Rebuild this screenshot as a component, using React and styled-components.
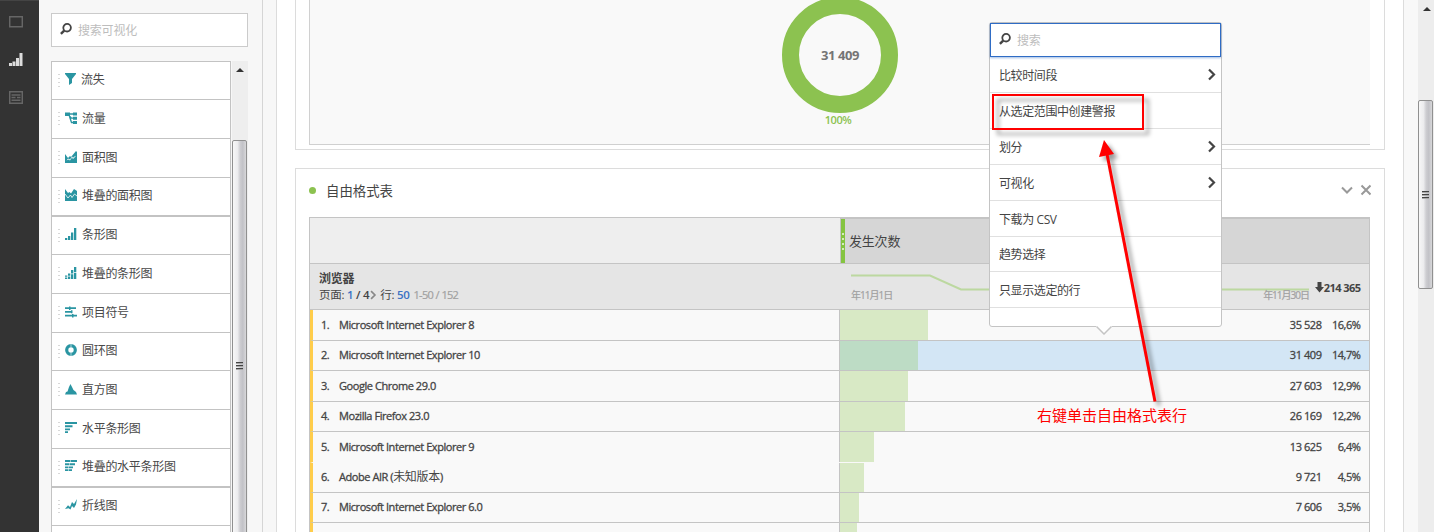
import React from "react";
import styled, { createGlobalStyle, css } from "styled-components";

const Global = createGlobalStyle`
  * { box-sizing: border-box; }
  html, body { margin: 0; padding: 0; overflow: hidden; background: #fff; }
  body { font-family: "Open Sans", "Noto Sans CJK SC", sans-serif; font-size: 12px; color: #444; }
`;

const Page = styled.div`
  position: relative;
  display: flex;
  width: 1434px;
  height: 532px;
  overflow: hidden;
  background: #f7f7f7;
`;

const Rail = styled.nav`
  display: flex;
  flex-direction: column;
  align-items: flex-start;
  width: 39px;
  padding: 15px 0 0 9px;
  background: #333;
  border-top: 1px solid #444;
  flex: none;
`;
const RailIcon = styled.svg`
  display: block;
  width: 14px;
  height: 14px;
  margin-bottom: ${(p) => p.$gap || 0}px;
`;

const Sidebar = styled.aside`
  width: 224px;
  flex: none;
  padding: 13px 14px 0 12px;
  border-right: 1px solid #d5d5d5;
`;
const SearchBox = styled.div`
  display: flex;
  align-items: center;
  height: 34px;
  padding-left: 8px;
  background: #fff;
  border: 1px solid #cbcbcb;
  color: #bdbdbd;
  letter-spacing: -0.2px;
  line-height: 18px;
  svg { margin-right: 6px; margin-top: -2px; }
`;
const SearchHint = styled.span`
  padding-top: 1px;
`;
const ListArea = styled.div`
  display: flex;
  margin-top: 14px;
  height: 480px;
`;
const VizList = styled.div`
  width: 180px;
  border: 1px solid #c3c3c3;
  border-bottom: 0;
  background: #fff;
`;
const VizItem = styled.div`
  display: flex;
  align-items: center;
  height: ${(p) => p.$h}px;
  padding: 0 0 3px 6px;
  border-bottom: ${(p) => (p.$thick ? 2 : 1)}px solid #c3c3c3;
  color: #484848;
  letter-spacing: -0.3px;
`;
const DragDots = styled.span`
  width: 2px;
  height: 16px;
  margin: 5px 5px 0 0;
  background: repeating-linear-gradient(#d8d8d8 0 1px, transparent 1px 4px);
`;
const VizIcon = styled.svg`
  width: 12px;
  height: 12px;
  margin-right: ${(p) => p.$gap}px;
  fill: #2a95a2;
  flex: none;
`;

const ListScroll = styled.div`
  width: 16px;
  margin-left: 1px;
  background: #eee;
  padding-top: 7px;
`;
const UpMark = styled.i`
  display: block;
  width: 0;
  height: 0;
  margin: 0 auto;
  border: 4px solid transparent;
  border-top: 0;
  border-bottom: 4px solid #333;
`;
const Thumb = styled.div`
  display: flex;
  align-items: center;
  justify-content: center;
  width: 15px;
  height: ${(p) => p.$h}px;
  margin-top: ${(p) => p.$top}px;
  border: 1px solid #909090;
  border-radius: 2px;
  background: linear-gradient(90deg, #f7f7f7, #ececee 35%, #cdcdd1 55%, #c2c2c7 75%, #d8d8da);
`;
const Grip = styled.i`
  width: 7px;
  height: 8px;
  margin-right: 1px;
  background: repeating-linear-gradient(#444 0 1px, #aaa 1px 2px, transparent 2px 3px);
`;

const Main = styled.main`
  width: 1128px;
  margin-left: 13px;
  padding: 0 18px;
  background: #fff;
  border: solid #dcdcdc;
  border-width: 0 1px;
  flex: none;
`;
const Panel = styled.section`
  border: 1px solid #dcdcdc;
  padding: 0 13px;
  height: ${(p) => p.$h}px;
  margin-bottom: 18px;
`;
const TopPanel = styled(Panel)`
  border-top: 0;
`;
const ChartBox = styled.div`
  display: flex;
  flex-direction: column;
  align-items: center;
  width: 1061px;
  height: 145px;
  background: #f9f9f9;
  border: solid #d0d0d0;
  border-width: 0 0 1px 1px;
`;
const Donut = styled.div`
  display: grid;
  place-items: center;
  width: 116px;
  height: 116px;
  margin-top: -3px;
  border: 17px solid #8cc250;
  border-radius: 50%;
  color: #757575;
  font-weight: 700;
  font-size: 13px;
  letter-spacing: -0.4px;
`;
const Percent = styled.div`
  margin-right: 4px;
  line-height: 14px;
  font-weight: 600;
  font-size: 11px;
  letter-spacing: -0.5px;
  color: #8cc250;
`;

const PanelHead = styled.header`
  display: flex;
  align-items: center;
  height: 48px;
  padding-bottom: 5px;
`;
const Dot = styled.i`
  width: 7px;
  height: 7px;
  margin-right: 10px;
  border-radius: 50%;
  background: #8cc250;
`;
const PanelTitle = styled.h2`
  flex: 1;
  margin: 0;
  padding-bottom: 1px;
  font-size: 13.4px;
  font-weight: 400;
`;
const PanelTools = styled.svg`
  width: 30px;
  height: 12px;
  margin-bottom: 2px;
  fill: none;
  stroke: #999;
  stroke-width: 2;
`;

const Table = styled.div`
  width: 1061px;
  border: 1px solid #c4c4c4;
  background: #f9f9f9;
`;
const HeadRow = styled.div`
  display: flex;
  height: 46px;
  border-bottom: 1px solid #c4c4c4;
`;
const Blank = styled.div`
  width: 531px;
  background: #eee;
  border-right: 1px solid #c4c4c4;
`;
const MetricHead = styled.div`
  display: flex;
  align-items: center;
  flex: 1;
  background: #d6d6d6;
  border-top: 1px solid #c4c4c4;
  font-size: 13px;
  letter-spacing: -0.2px;
`;
const MetricName = styled.span`
  padding-bottom: 2px;
`;
const Handle = styled.span`
  display: flex;
  align-items: center;
  justify-content: center;
  align-self: stretch;
  width: 4px;
  margin-right: 4px;
  background: #85c441;
  &::after {
    content: "";
    width: 2px;
    height: 17px;
    background: repeating-linear-gradient(#d4ebbc 0 2px, transparent 2px 5px);
  }
`;
const DimRow = styled(HeadRow)`
  background: #e5e5e5;
`;
const DimCell = styled.div`
  width: 530px;
  padding: 7px 0 0 9px;
  line-height: 16px;
`;
const DimName = styled.div`
  font-weight: 700;
  letter-spacing: -0.3px;
`;
const Paging = styled.div`
  display: flex;
  align-items: center;
  font-size: 11.5px;
  letter-spacing: -0.25px;
  white-space: pre;
  b { font-weight: 600; }
`;
const Blue = styled.b`
  color: #3b72c4;
`;
const Muted = styled.span`
  color: #a0a0a0;
  margin-left: 4px;
  font-size: 11px;
  letter-spacing: -0.75px;
  word-spacing: 0.5px;
  -webkit-text-stroke: 0.2px #a0a0a0;
`;
const TrendCell = styled.div`
  display: flex;
  flex: 1;
  padding-left: 11px;
`;
const Trend = styled.div`
  width: 458px;
  flex: none;
  padding-top: 9px;
  svg { display: block; }
`;
const TrendDates = styled.div`
  display: flex;
  justify-content: space-between;
  margin-top: -5px;
  line-height: 14px;
  font-size: 10px;
  letter-spacing: -1px;
  color: #a0a0a0;
  -webkit-text-stroke: 0.2px #a0a0a0;
`;
const Total = styled.div`
  display: flex;
  align-items: center;
  flex: 1;
  justify-content: flex-end;
  padding-right: 8.500px;
  padding-top: 1px;
  font-weight: 700;
  font-size: 11px;
  letter-spacing: -0.55px;
  white-space: nowrap;
`;

const Row = styled.div`
  display: flex;
  align-items: stretch;
  height: ${(p) => p.$h}px;
  border-bottom: 1px solid ${(p) => (p.$open ? "#f9f9f9" : "#c4c4c4")};
  border-left: 3px solid #ffcd4b;
  line-height: ${(p) => p.$h - 2}px;
  font-size: 11px;
  letter-spacing: -0.44px;
  -webkit-text-stroke: 0.3px #444;
`;
const Rank = styled.span`
  width: 26px;
  padding-left: 8px;
`;
const Name = styled.span`
  width: 500px;
  flex: none;
`;
const Cjk = styled.span`
  font-size: 12px;
  letter-spacing: -0.3px;
  -webkit-text-stroke: 0;
`;
const Values = styled.div`
  display: flex;
  flex: 1;
  justify-content: flex-end;
  padding-right: 8.500px;
  border-left: 1px solid #c4c4c4;
  ${(p) => css`
    background: linear-gradient(${p.$on ? "#bddcc5, #bddcc5" : "#d8e9c5, #d8e9c5"}) 0 0 / ${p.$bar}px 100% no-repeat
      ${p.$on ? "#d3e6f5" : "#f9f9f9"};
  `}
`;
const Pct = styled.span`
  width: 39px;
  text-align: right;
`;

const Outer = styled.div`
  width: 31px;
  flex: none;
  padding-left: 14px;
  background: #f8f8f8;
`;
const PageScroll = styled.div`
  width: 17px;
  height: 532px;
  padding: 7px 0 0 0;
  background: #ededed;
`;

const Menu = styled.div`
  position: absolute;
  left: 989px;
  top: 22px;
  width: 233px;
  height: 305px;
  background: #fff;
  border: 1px solid #c4c4c4;
  border-radius: 3px;
`;
const MenuSearch = styled(SearchBox)`
  height: 34px;
  margin-bottom: 1px;
  border: 1px solid #2f6cc5;
  box-shadow: 0 1px 2px rgba(47, 108, 197, 0.45);
`;
const MenuItem = styled.div`
  display: flex;
  align-items: center;
  justify-content: space-between;
  height: ${(p) => p.$h}px;
  padding: 0 5px 0 9px;
  border-bottom: 1px solid #e0e0e0;
  letter-spacing: -0.4px;
  svg { margin-bottom: 1px; }
`;
const Caret = styled.svg`
  position: absolute;
  left: 106px;
  top: 302px;
  width: 16px;
  height: 10px;
`;
const Highlight = styled.div`
  position: absolute;
  left: 992px;
  top: 94px;
  width: 152px;
  height: 36px;
  border: 2px solid #f00;
  filter: drop-shadow(5px 5px 2px rgba(0, 0, 0, 0.4));
`;
const Pointer = styled.svg`
  position: absolute;
  left: 1090px;
  top: 130px;
  width: 85px;
  height: 285px;
  filter: drop-shadow(4px 4px 2px rgba(0, 0, 0, 0.4));
`;
const Note = styled.div`
  position: absolute;
  left: 1037px;
  top: 404px;
  line-height: 22px;
  font-size: 15px;
  white-space: nowrap;
  color: #f00;
`;

const Magnifier = () => (
  <svg width="12" height="12" viewBox="0 0 12 12" fill="none" stroke="#444">
    <circle cx="7.1" cy="4.7" r="3.800" strokeWidth="1.800" />
    <path d="M4.200 7.600 .9 10.900" strokeWidth="2.400" />
  </svg>
);
const Chevron = ({ w = 9, h = 13, color = "#444", sw = 2.2 }) => (
  <svg width={w} height={h} viewBox="0 0 9 13" fill="none" stroke={color} strokeWidth={sw}>
    <path d="M2 1.5 7 6.5 2 11.5" />
  </svg>
);

const icons = {
  funnel: <path d="M0 0h11v1L7 6v4l-3 2V6L0 1z" />,
  flow: (
    <>
      <path d="M0 .5h5v3.500H0zM8 .5h4v3H8zM8 4.700h4v3H8zM8 9h4v3H8z" />
      <path d="M4 2h5M3 2.500l3.500 3.700H9M4.500 4.500 6.500 10.500H9" fill="none" stroke="#2a95a2" strokeWidth="1.300" />
    </>
  ),
  area: <path d="M0 3l3 4 2-2 1 1 5-6 1 1v11H0zM1.500 9.500l2-1 1.500 1L7 6.500l1 1.500L10.500 5.500v-.8L8 6.800 7 5.500 5 8.500 3 7.500z" />,
  areaStack: (
    <>
      <path d="M0 0l3 4 1.500-1L6 4.500 9 0l3 2v10H0z" />
      <path d="M0 5l3 4 2.500-3L7 8.500 9.500 5 12 7" fill="none" stroke="#fff" strokeWidth=".8" />
    </>
  ),
  bars: <path d="M0 10h2.300v2H0zM3 8h2.300v4H3zM6 4.500h2.300V12H6zM9 0h2.300v12H9z" />,
  barsStack: (
    <path d="M0 8.500h2.300v1.200H0zM0 10.500h2.300V12H0zM3 6.500h2.300v2.200H3zM3 9.500h2.300V12H3zM6 3h2.300v3.500H6zM6 7.300h2.300V12H6zM9 0h2.300v5H9zM9 5.800h2.300V12H9z" />
  ),
  bullet: <path d="M0 1.300h4V.5h1.500v.8H11v1.700H5.500v1H4V3H0zM0 5h6v-.7h1.500v3H6v-.6H0zM0 8.800h7V8h1.500v.8H12v1.700H8.500v1H7v-1H0z" />,
  ring: (
    <>
      <circle cx="6" cy="6" r="4.300" fill="none" stroke="#2a95a2" strokeWidth="3.200" />
      <path d="M6 0v3M6 9v3" stroke="#fff" strokeWidth=".6" />
    </>
  ),
  histogram: <path d="M0 11.500L1 9l1.500-.5L4 4l1.500-3 1.500 3 1.500 3L11 9l1 2.500z" />,
  hbars: <path d="M0 0h12v2H0zM0 3.200h7.500v2H0zM0 6.400h5v1.800H0zM0 9.300h3v1.800H0z" />,
  hbarsStack: (
    <path d="M0 0h5.500v2H0zM6 0h6v2H6zM0 3.200h4v2H0zM4.500 3.200H10v2H4.500zM0 6.400h3v1.800H0zM3.500 6.400H8v1.800H3.500zM0 9.300h3v1.800H0zM3.500 9.300H7v1.800H3.500z" />
  ),
  line: <path d="M0 10l3-3.800L5 8l2-5 2 2 3-5-1 5.500L9 9 7 7 5.500 10.500l-2-1.200z" />,
};

const vizItems = [
  ["流失", "funnel", 38, 4],
  ["流量", "flow", 39, 5],
  ["面积图", "area", 39, 5],
  ["堆叠的面积图", "areaStack", 39, 5, true],
  ["条形图", "bars", 38, 5],
  ["堆叠的条形图", "barsStack", 39, 5],
  ["项目符号", "bullet", 39, 5],
  ["圆环图", "ring", 38, 5],
  ["直方图", "histogram", 39, 5],
  ["水平条形图", "hbars", 39, 5],
  ["堆叠的水平条形图", "hbarsStack", 39, 5, true],
  ["折线图", "line", 38, 5],
];

const rows = [
  ["Microsoft Internet Explorer 8", "35 528", "16,6%", 31, 88],
  ["Microsoft Internet Explorer 10", "31 409", "14,7%", 30, 78],
  ["Google Chrome 29.0", "27 603", "12,9%", 31, 68],
  ["Mozilla Firefox 23.0", "26 169", "12,2%", 30, 65],
  ["Microsoft Internet Explorer 9", "13 625", "6,4%", 31, 34],
  [<>Adobe AIR (<Cjk>未知版本</Cjk>)</>, "9 721", "4,5%", 30, 24],
  ["Microsoft Internet Explorer 6.0", "7 606", "3,5%", 30, 19],
];

const menuItems = [
  ["比较时间段", 35, true],
  ["从选定范围中创建警报", 36],
  ["划分", 36, true],
  ["可视化", 36, true],
  ["下载为 CSV", 36],
  ["趋势选择", 35],
  ["只显示选定的行", 36],
];

export default function App() {
  return (
    <Page>
      <Global />
      <Rail>
        <RailIcon $gap={23} viewBox="0 0 14 14" fill="none" stroke="#666" strokeWidth="1.500">
          <path d="M.7.7h12.600v10H.7z" />
        </RailIcon>
        <RailIcon $gap={24} viewBox="0 0 14 14" fill="#ddd">
          <path d="M0 10h3v3H0zM3.500 8.500h3V13h-3zM7 5h3v8H7zM10.500 0h3v13h-3z" />
        </RailIcon>
        <RailIcon viewBox="0 0 14 14" fill="none" stroke="#666" strokeWidth="1.500">
          <path d="M.7.7h12.600v11.600H.7zM2.500 4h9M2.500 6.500h4M8 6.500h3.500M2.500 9.200h9" />
        </RailIcon>
      </Rail>

      <Sidebar>
        <SearchBox>
          <Magnifier />
          <SearchHint>搜索可视化</SearchHint>
        </SearchBox>
        <ListArea>
          <VizList>
            {vizItems.map(([label, icon, h, gap, thick]) => (
              <VizItem key={label} $h={h} $thick={thick}>
                <DragDots />
                <VizIcon $gap={gap} viewBox="0 0 12 12">{icons[icon]}</VizIcon>
                {label}
              </VizItem>
            ))}
          </VizList>
          <ListScroll>
            <UpMark />
            <Thumb $h={452} $top={68}>
              <Grip />
            </Thumb>
          </ListScroll>
        </ListArea>
      </Sidebar>

      <Main>
        <TopPanel $h={150}>
          <ChartBox>
            <Donut>31 409</Donut>
            <Percent>100%</Percent>
          </ChartBox>
        </TopPanel>

        <Panel $h={400}>
          <PanelHead>
            <Dot />
            <PanelTitle>自由格式表</PanelTitle>
            <PanelTools viewBox="0 0 30 12">
              <path d="M1 3.500 6 8.500 11 3.500M20.500 1.500l9 9M29.500 1.500l-9 9" />
            </PanelTools>
          </PanelHead>
          <Table>
            <HeadRow>
              <Blank />
              <MetricHead>
                <Handle />
                <MetricName>发生次数</MetricName>
              </MetricHead>
            </HeadRow>
            <DimRow>
              <DimCell>
                <DimName>浏览器</DimName>
                <Paging>
                  页面: <Blue>1</Blue> <b> / 4</b>
                  <Chevron w={8} h={10} color="#888" />
                  {" 行: "}
                  <Blue>50</Blue>
                  <Muted>1-50 / 152</Muted>
                </Paging>
              </DimCell>
              <TrendCell>
                <Trend>
                  <svg width="458" height="20" fill="none" stroke="#bcd8a0" strokeWidth="2">
                    <path d="M0 2.500H79L110 16.500H458" />
                  </svg>
                  <TrendDates>
                    <span>年11月1日</span>
                    <span>年11月30日</span>
                  </TrendDates>
                </Trend>
                <Total>
                  <svg width="9" height="11" viewBox="0 0 9 11" fill="#444">
                    <path d="M2.500 0h4v5H9L4.500 10.500 0 5h2.500z" />
                  </svg>
                  214 365
                </Total>
              </TrendCell>
            </DimRow>
            {rows.map(([name, value, pct, h, bar], i) => (
              <Row key={i} $h={h} $open={i === 4}>
                <Rank>{i + 1}.</Rank>
                <Name>{name}</Name>
                <Values $bar={bar} $on={i === 1}>
                  <span>{value}</span>
                  <Pct>{pct}</Pct>
                </Values>
              </Row>
            ))}
            <Row $h={30}>
              <Rank />
              <Name />
              <Values $bar={17} />
            </Row>
          </Table>
        </Panel>
      </Main>

      <Outer>
        <PageScroll>
          <UpMark />
          <Thumb $h={189} $top={89}>
            <Grip />
          </Thumb>
        </PageScroll>
      </Outer>

      <Menu>
        <MenuSearch>
          <Magnifier />
          <SearchHint>搜索</SearchHint>
        </MenuSearch>
        {menuItems.map(([label, h, sub]) => (
          <MenuItem key={label} $h={h}>
            {label}
            {sub && <Chevron />}
          </MenuItem>
        ))}
        <Caret viewBox="0 0 16 10">
          <path d="M0 0h16v1.500L8 9 0 1.500z" fill="#fff" />
          <path d="M.5 1.500 8 9l7.500-7.500" fill="none" stroke="#c4c4c4" strokeWidth="1.500" />
        </Caret>
      </Menu>

      <Highlight />
      <Pointer viewBox="0 0 85 285">
        <path d="M17 24 65 271.500" stroke="#f00" strokeWidth="3" />
        <path d="M14 10 24 24 9 27z" fill="#f00" />
      </Pointer>
      <Note>右键单击自由格式表行</Note>
    </Page>
  );
}
